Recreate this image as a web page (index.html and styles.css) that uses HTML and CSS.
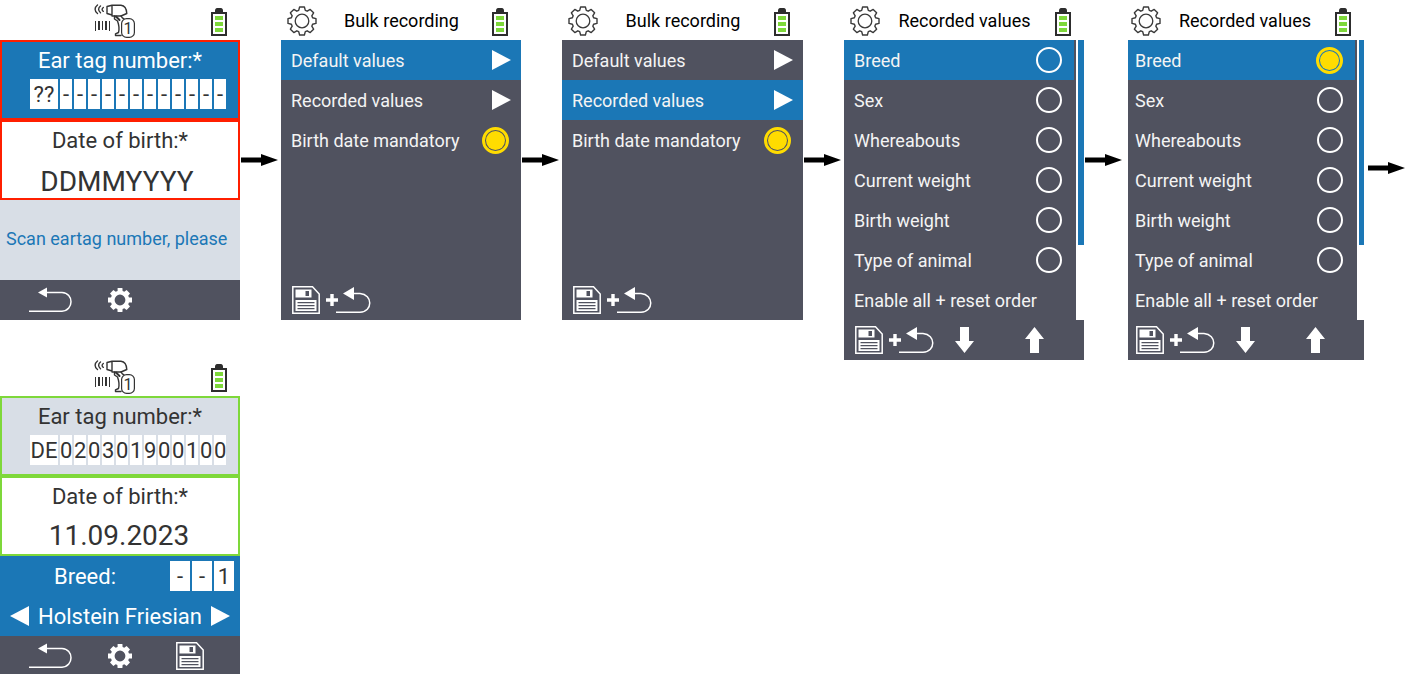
FILE: index.html
```
<!DOCTYPE html>
<html lang="en">
<head>
  <meta charset="UTF-8">
  <meta name="viewport" content="width=device-width, initial-scale=1.0">
  <title>Bulk recording</title>
  <link rel="stylesheet" href="styles.css">
</head>
<body>
  <!-- shared icons -->
  <svg class="defs" width="0" height="0" aria-hidden="true">
    <symbol id="gear-shape" viewBox="-16 -16 32 32">
      <path d="M-3.3-10.6L-2.4-14H2.4L3.3-10.6 5.2-9.8 8.2-11.6 11.6-8.2 9.8-5.2 10.6-3.3 14-2.4V2.4L10.6 3.3 9.8 5.2 11.6 8.2 8.2 11.6 5.2 9.8 3.3 10.6 2.4 14H-2.4L-3.3 10.6-5.2 9.8-8.2 11.6-11.6 8.2-9.8 5.2-10.6 3.3-14 2.4V-2.4L-10.6-3.3-9.8-5.2-11.6-8.2-8.2-11.6-5.2-9.8Z" fill="none" stroke="#3a3a3a" stroke-width="1.4" stroke-linejoin="round"/>
      <circle r="6.8" fill="none" stroke="#3a3a3a" stroke-width="1.3"/>
    </symbol>
    <symbol id="gear-solid" viewBox="-12 -12 24 24">
      <path fill-rule="evenodd" fill="#fff" d="M-2.4-9L-2.4-12H2.4L2.6-9 4.3-8.2 6.6-10 10-6.6 8.2-4.3 9-2.6 12-2.4V2.4L9 2.6 8.2 4.3 10 6.6 6.6 10 4.3 8.2 2.6 9 2.4 12H-2.4L-2.6 9-4.3 8.2-6.6 10-10 6.6-8.2 4.3-9 2.6-12 2.4V-2.4L-9-2.6-8.2-4.3-10-6.6-6.6-10-4.3-8.2ZM0-5.4A5.4 5.4 0 1 0 0 5.4A5.4 5.4 0 1 0 0-5.4Z"/>
    </symbol>
    <symbol id="battery" viewBox="0 0 16 30">
      <path d="M4 2.5C4 1 5 0 6 0h4c1 0 2 1 2 2.5V4H4z" fill="#2d2d2d"/>
      <rect x="1" y="5" width="14" height="22" fill="#fff" stroke="#2d2d2d" stroke-width="2"/>
      <path d="M4 8h8v4H4zM4 14h8v4H4zM4 20h8v4H4z" fill="#7ed83a"/>
    </symbol>
    <symbol id="scanner" viewBox="0 0 52 34">
      <g fill="none" stroke="#333" stroke-width="1.4" stroke-linecap="round" stroke-linejoin="round">
        <path d="M3.5 1C.3 3.5 .3 7 3.5 9.5M6.500 2C4 4 4 6.700 6.500 8.700M9.300 3.500C7.700 4.700 7.700 6.200 9.300 7.300"/>
        <path d="M13 2.500L18 1.300V11L13 9.500ZM18 1.300H27C31 1.700 32.500 4.500 32.800 9.500L27 12H18"/>
        <path d="M20.500 12V15L23.500 17C25 21 25.500 25 24.500 28.500L21.500 29.800V31.500H27M27 12C27.500 13 28 14 30 15"/>
        <path d="M22 12.500L25.500 16" stroke-width="2"/>
      </g>
      <path d="M1 17h1v10H1zM4 17h2v9H4zM8 17h1v9H8zM11 17h2v9h-2zM15 17h1v10h-1z" fill="#333"/>
      <rect x="27.600" y="14.600" width="12.800" height="18.800" rx="5" fill="#fff" stroke="#333" stroke-width="1.200"/>
    </symbol>
    <symbol id="back" viewBox="0 0 44 26">
      <path d="M17 5.500H34C46 6 46 23.500 34 24.200H1" fill="none" stroke="#fff" stroke-width="1.500"/>
      <path d="M10 5.500L19 .5V10.500Z" fill="#fff"/>
    </symbol>
    <symbol id="save" viewBox="0 0 28 28">
      <path d="M.8.8H20.500L27.200 8V27.200H.8Z" fill="none" stroke="#fff" stroke-width="1.500"/>
      <path d="M3.500 3.500H19.500V11.500H3.500ZM13.500 5V10H17V5ZM3.500 14H24.500V25H3.500ZM5.500 16V17.200H22.500V16ZM5.500 19V20.200H22.500V19ZM5.500 22V23.200H22.500V22Z" fill="#fff" fill-rule="evenodd"/>
    </symbol>
    <symbol id="save-back" viewBox="0 0 79 28">
      <use href="#save" width="28" height="28"/>
      <path d="M38.300 8H41.700V12.300H46V15.700H41.700V20H38.300V15.700H34V12.300H38.300Z" fill="#fff"/>
      <path d="M60 7.500H68C81 8.500 81 25.500 68 26.300H44" fill="none" stroke="#fff" stroke-width="1.500"/>
      <path d="M51 7.500L62 1V14Z" fill="#fff"/>
    </symbol>
    <symbol id="next" viewBox="0 0 19 20"><path d="M0 0L19 10L0 20Z" fill="#fff"/></symbol>
    <symbol id="prev" viewBox="0 0 19 20"><path d="M19 0L0 10L19 20Z" fill="#fff"/></symbol>
    <symbol id="down" viewBox="0 0 19 26"><path d="M5 0H14V14H19L9.500 26L0 14H5Z" fill="#fff"/></symbol>
    <symbol id="up" viewBox="0 0 19 26"><path d="M5 26H14V12H19L9.500 0L0 12H5Z" fill="#fff"/></symbol>
    <symbol id="step" viewBox="0 0 37 12"><path d="M0 3.500H20V0L37 6L20 12V8.500H0Z" fill="#000"/></symbol>
  </svg>

  <main class="flow">
    <section class="screen">
      <header class="status">
        <span></span>
        <svg class="scanner"><use href="#scanner"/><text x="34" y="30" text-anchor="middle">1</text></svg>
        <svg class="battery"><use href="#battery"/></svg>
      </header>
      <div class="field active error">
        <div class="field-title">Ear tag number:*</div>
        <div class="cells">
          <input class="country" value="??" aria-label="Country">
          <input value="-" aria-label="Digit 1"><input value="-" aria-label="Digit 2"><input value="-" aria-label="Digit 3"><input value="-" aria-label="Digit 4"><input value="-" aria-label="Digit 5"><input value="-" aria-label="Digit 6"><input value="-" aria-label="Digit 7"><input value="-" aria-label="Digit 8"><input value="-" aria-label="Digit 9"><input value="-" aria-label="Digit 10"><input value="-" aria-label="Digit 11"><input value="-" aria-label="Digit 12">
        </div>
      </div>
      <div class="field error">
        <label class="field-title" for="birth1">Date of birth:*</label>
        <input class="date empty" id="birth1" value="DDMMYYYY">
      </div>
      <p class="message">Scan eartag number, please</p>
      <footer class="keys">
        <button aria-label="Back"><svg class="i-back"><use href="#back"/></svg></button>
        <button aria-label="Settings"><svg class="i-gear"><use href="#gear-solid"/></svg></button>
      </footer>
    </section>

    <svg class="step"><use href="#step"/></svg>

    <section class="screen">
      <header class="status">
        <svg class="gear"><use href="#gear-shape"/></svg>
        <h2>Bulk recording</h2>
        <svg class="battery"><use href="#battery"/></svg>
      </header>
      <div class="menu">
        <button class="row selected">Default values <svg class="i-next"><use href="#next"/></svg></button>
        <button class="row">Recorded values <svg class="i-next"><use href="#next"/></svg></button>
        <label class="row">Birth date mandatory <input type="checkbox" checked></label>
      </div>
      <footer class="keys">
        <button aria-label="Save and back"><svg class="i-save-back"><use href="#save-back"/></svg></button>
      </footer>
    </section>

    <svg class="step"><use href="#step"/></svg>

    <section class="screen">
      <header class="status">
        <svg class="gear"><use href="#gear-shape"/></svg>
        <h2>Bulk recording</h2>
        <svg class="battery"><use href="#battery"/></svg>
      </header>
      <div class="menu">
        <button class="row">Default values <svg class="i-next"><use href="#next"/></svg></button>
        <button class="row selected">Recorded values <svg class="i-next"><use href="#next"/></svg></button>
        <label class="row">Birth date mandatory <input type="checkbox" checked></label>
      </div>
      <footer class="keys">
        <button aria-label="Save and back"><svg class="i-save-back"><use href="#save-back"/></svg></button>
      </footer>
    </section>

    <svg class="step"><use href="#step"/></svg>

    <section class="screen">
      <header class="status">
        <svg class="gear"><use href="#gear-shape"/></svg>
        <h2>Recorded values</h2>
        <svg class="battery"><use href="#battery"/></svg>
      </header>
      <div class="scroll">
        <div class="menu">
          <label class="row selected">Breed <input type="checkbox"></label>
          <label class="row">Sex <input type="checkbox"></label>
          <label class="row">Whereabouts <input type="checkbox"></label>
          <label class="row">Current weight <input type="checkbox"></label>
          <label class="row">Birth weight <input type="checkbox"></label>
          <label class="row">Type of animal <input type="checkbox"></label>
          <button class="row">Enable all + reset order</button>
        </div>
        <div class="bar"></div>
      </div>
      <footer class="keys">
        <button aria-label="Save and back"><svg class="i-save-back"><use href="#save-back"/></svg></button>
        <button aria-label="Move down"><svg class="i-move"><use href="#down"/></svg></button>
        <button aria-label="Move up"><svg class="i-move"><use href="#up"/></svg></button>
      </footer>
    </section>

    <svg class="step"><use href="#step"/></svg>

    <section class="screen narrow">
      <header class="status">
        <svg class="gear"><use href="#gear-shape"/></svg>
        <h2>Recorded values</h2>
        <svg class="battery"><use href="#battery"/></svg>
      </header>
      <div class="scroll">
        <div class="menu">
          <label class="row selected">Breed <input type="checkbox" checked></label>
          <label class="row">Sex <input type="checkbox"></label>
          <label class="row">Whereabouts <input type="checkbox"></label>
          <label class="row">Current weight <input type="checkbox"></label>
          <label class="row">Birth weight <input type="checkbox"></label>
          <label class="row">Type of animal <input type="checkbox"></label>
          <button class="row">Enable all + reset order</button>
        </div>
        <div class="bar"></div>
      </div>
      <footer class="keys">
        <button aria-label="Save and back"><svg class="i-save-back"><use href="#save-back"/></svg></button>
        <button aria-label="Move down"><svg class="i-move"><use href="#down"/></svg></button>
        <button aria-label="Move up"><svg class="i-move"><use href="#up"/></svg></button>
      </footer>
    </section>

    <svg class="step last"><use href="#step"/></svg>

    <section class="screen result">
      <header class="status">
        <span></span>
        <svg class="scanner"><use href="#scanner"/><text x="34" y="30" text-anchor="middle">1</text></svg>
        <svg class="battery"><use href="#battery"/></svg>
      </header>
      <div class="field done filled">
        <div class="field-title">Ear tag number:*</div>
        <div class="cells">
          <input class="country" value="DE" aria-label="Country">
          <input value="0" aria-label="Digit 1"><input value="2" aria-label="Digit 2"><input value="0" aria-label="Digit 3"><input value="3" aria-label="Digit 4"><input value="0" aria-label="Digit 5"><input value="1" aria-label="Digit 6"><input value="9" aria-label="Digit 7"><input value="0" aria-label="Digit 8"><input value="0" aria-label="Digit 9"><input value="1" aria-label="Digit 10"><input value="0" aria-label="Digit 11"><input value="0" aria-label="Digit 12">
        </div>
      </div>
      <div class="field done">
        <label class="field-title" for="birth2">Date of birth:*</label>
        <input class="date" id="birth2" value="11.09.2023">
      </div>
      <div class="breed">
        <div class="breed-code">
          <span>Breed:</span>
          <div class="cells wide">
            <input value="-" aria-label="Breed code 1"><input value="-" aria-label="Breed code 2"><input value="1" aria-label="Breed code 3">
          </div>
        </div>
        <div class="breed-name">
          <button aria-label="Previous breed"><svg class="i-next"><use href="#prev"/></svg></button>
          <span>Holstein Friesian</span>
          <button aria-label="Next breed"><svg class="i-next"><use href="#next"/></svg></button>
        </div>
      </div>
      <footer class="keys">
        <button aria-label="Back"><svg class="i-back"><use href="#back"/></svg></button>
        <button aria-label="Settings"><svg class="i-gear"><use href="#gear-solid"/></svg></button>
        <button aria-label="Save"><svg class="i-save"><use href="#save"/></svg></button>
      </footer>
    </section>
  </main>
</body>
</html>
```

FILE: styles.css
```
* { box-sizing: border-box; }
body { margin: 0; background: #fff; color: #333; font-family: Roboto, sans-serif; font-size: 18px; }
svg { display: block; }
.defs { position: absolute; }
button { padding: 0; border: none; background: none; color: inherit; font: inherit; cursor: pointer; }
input { margin: 0; padding: 0; border: none; font: inherit; color: #333; }

.flow { display: grid; grid-template-columns: 240fr 41fr 240fr 41fr 241fr 41fr 240fr 44fr 236fr 45fr; align-items: start; }
.screen { --pad: 10px; min-width: 0; }
.narrow { --pad: 7px; }
.step { width: 37px; height: 12px; margin: 154px 0 0 1px; }
.step.last { margin: 162px 0 0 4px; }

.status { display: grid; grid-template-columns: 1fr auto 1fr; align-items: end; height: 40px; padding: 0 13px 2px calc(var(--pad) - 5px); }
.status h2 { margin: 0; padding-left: 9px; font-size: 18px; font-weight: normal; line-height: 34px; color: #000; white-space: nowrap; }
.gear { width: 32px; height: 34px; }
.scanner { width: 52px; height: 34px; margin-left: 8px; }
.scanner text { font-size: 16px; fill: #333; }
.battery { width: 16px; height: 30px; justify-self: end; }

.field { height: 80px; border: 2px solid #ff1f00; text-align: center; font-size: 22px; }
.field.done { border-color: #7ed83a; }
.field.active { background: #1b77b6; color: #fff; }
.field.filled { background: #d8dee6; }
.field-title { display: block; line-height: 37px; }
.date { display: block; width: 100%; height: 39px; padding-top: 2px; padding-right: 2px; background: none; font-size: 28px; text-align: center; }
.date.empty { padding-top: 6px; padding-right: 6px; }

.cells { display: flex; gap: 2px; padding-left: 28px; }
.cells input { width: 12px; height: 30px; background: #fff; text-align: center; }
.cells .country { width: 28px; }
.cells.wide { padding: 0; }
.cells.wide input { width: 20px; }

.message { height: 80px; margin: 0; padding-left: 6px; background: #d8dee6; color: #1b77b6; line-height: 78px; white-space: nowrap; }

.menu { min-height: 240px; background: #50525f; color: #f4f4f4; }
.row { display: flex; align-items: center; justify-content: space-between; width: 100%; height: 40px; padding: 0 12px 0 var(--pad); white-space: nowrap; text-align: left; }
button.row { padding-right: 10px; }
.row.selected { background: #1b77b6; }
.i-next { width: 19px; height: 20px; }
.row input { appearance: none; width: 26px; height: 26px; border: 2px solid #fff; border-radius: 50%; }
.row input:checked { width: 27px; height: 27px; border: 3px solid #ffdc00; padding: 1px; background: #ffdc00 content-box; }

.scroll { display: flex; gap: 2px; }
.scroll .menu { flex: 1; min-height: 280px; }
.scroll .row { padding-right: 14px; }
.scroll .row.selected { width: calc(100% - 2px); padding-right: 12px; }
.bar { width: 6px; height: 205px; background: #1b77b6; }
.narrow .bar { width: 5px; }

.keys { display: grid; grid-template-columns: repeat(3, 70px); justify-items: center; align-items: center; height: 40px; padding-left: calc(var(--pad) + 5px); background: #50525f; }
.keys button { display: flex; justify-content: center; }
.i-back { width: 44px; height: 26px; }
.i-gear { width: 24px; height: 24px; }
.i-save { width: 28px; height: 28px; }
.i-save-back { width: 79px; height: 28px; }
.i-move { width: 19px; height: 26px; }

.result { grid-column: 1; }
.result .status { height: 36px; }
.result .keys { height: 38px; padding-top: 2px; }
.breed { background: #1b77b6; color: #fff; font-size: 22px; }
.breed-code { display: flex; align-items: center; justify-content: space-between; height: 40px; padding: 0 6px 0 54px; }
.breed-name { display: flex; align-items: center; justify-content: space-between; height: 40px; padding: 0 10px; white-space: nowrap; }
```
